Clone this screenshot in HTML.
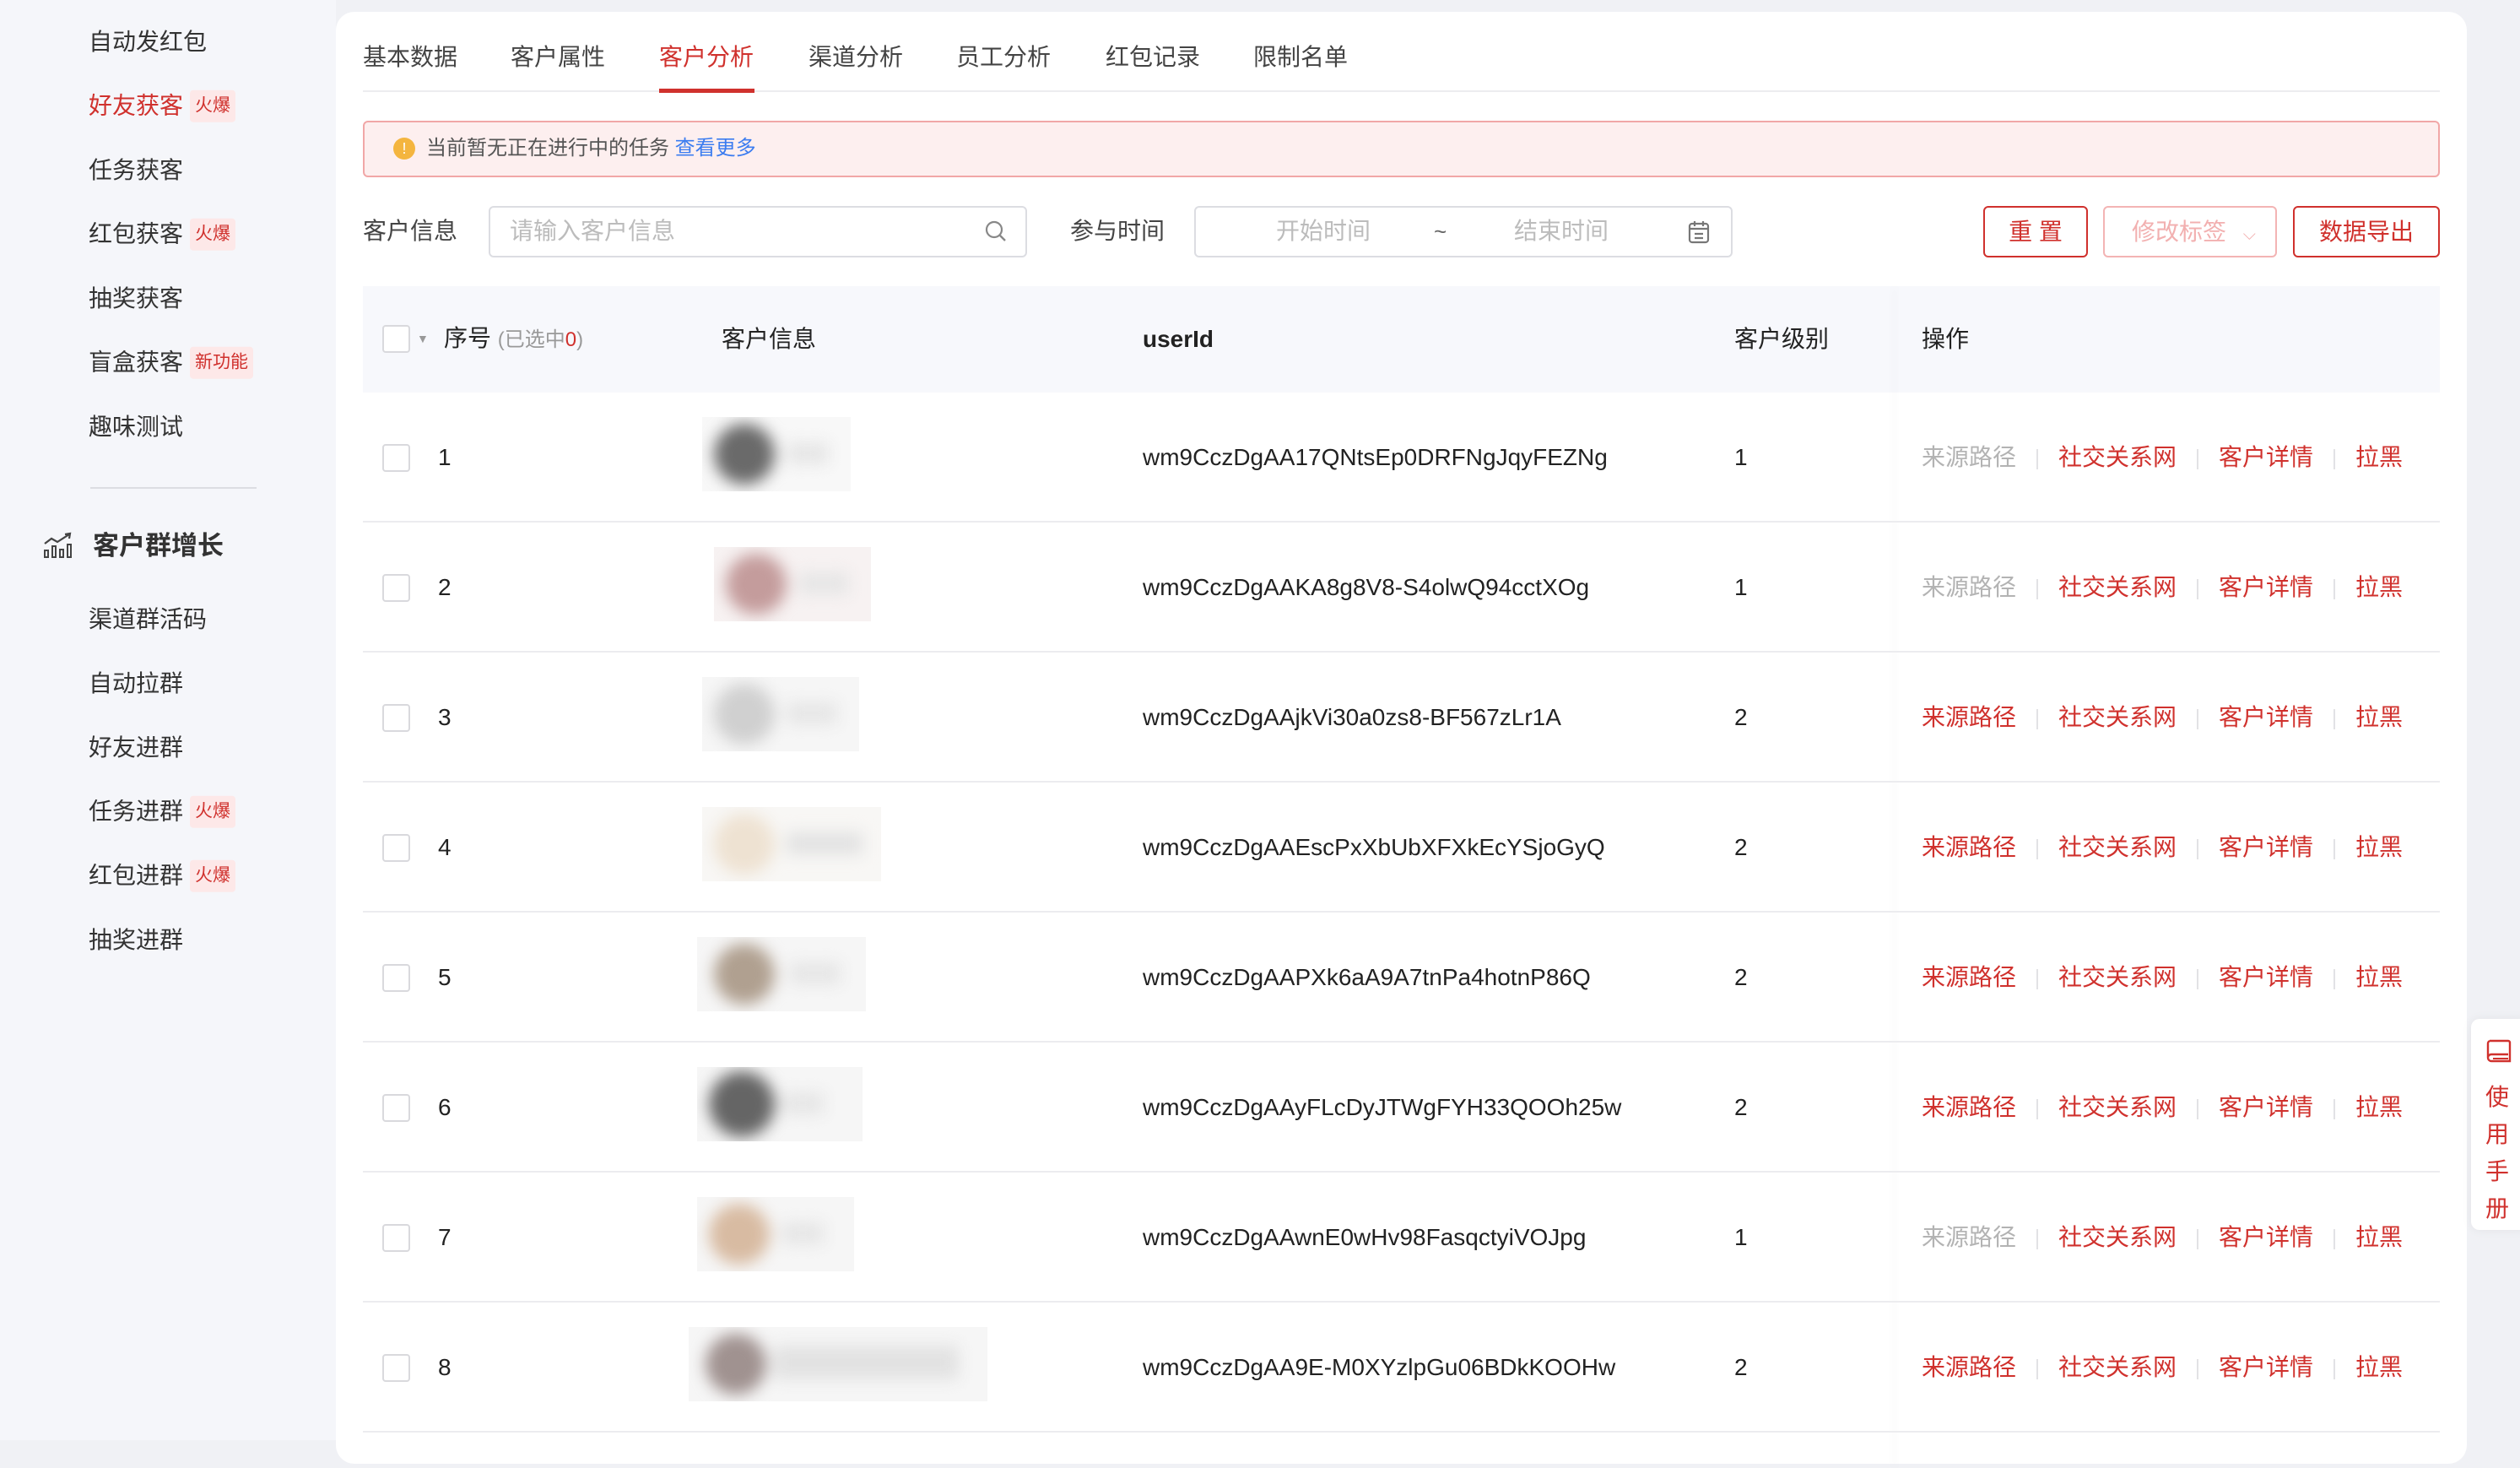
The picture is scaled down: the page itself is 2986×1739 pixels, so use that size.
<!DOCTYPE html>
<html><head><meta charset="utf-8"><style>
*{margin:0;padding:0;box-sizing:border-box}
body{width:2986px;height:1706px;background:#f0f1f5;font-family:"Liberation Sans","Noto Sans CJK SC",sans-serif;position:relative;overflow:hidden;color:#333}
.a{position:absolute;white-space:nowrap}
.side{position:absolute;left:0;top:0;width:398px;height:1706px;background:#f5f6fa}
.si{position:absolute;left:105px;font-size:28px;color:#333;line-height:40px;transform:translateY(-50%)}
.bd{display:inline-block;background:#fde8e8;color:#d0312d;font-size:21px;line-height:38px;padding:0 6px;border-radius:4px;margin-left:8px;vertical-align:middle;position:relative;top:-2px}
.card{position:absolute;left:398px;top:14px;width:2525px;height:1720px;background:#fff;border-radius:22px}
.tab{position:absolute;top:48px;font-size:28px;color:#444;line-height:40px}
.mid{transform:translateY(-50%)}
.row{position:absolute;left:430px;width:2461px;height:154px;border-bottom:2px solid #ececef}
.cb{position:absolute;width:33px;height:33px;border:2px solid #d9d9dd;border-radius:4px;background:#fff}
.td{position:absolute;font-size:28px;color:#222;line-height:40px;top:57px;white-space:nowrap}
.op{position:absolute;top:57px;font-size:28px;line-height:40px;color:#d0312d;white-space:nowrap}
.op .g{color:#b3b3b3}
.sep{display:inline-block;width:2px;height:24px;background:#e2e2e5;vertical-align:middle;margin:0 24px 0 24px}
.btn{position:absolute;top:244px;height:61px;border:2px solid #d0312d;border-radius:6px;color:#d0312d;font-size:28px;line-height:57px;text-align:center}
.av{position:absolute;top:29px;height:88px;overflow:hidden;background:#f6f6f6}
.av .in{position:absolute;left:0;top:0;width:100%;height:100%;filter:blur(9px)}
.av .c{position:absolute;left:14px;top:8px;width:72px;height:72px;border-radius:50%}
.av .n{position:absolute;left:100px;top:30px;height:26px;background:#e6e6e6}
</style></head><body>
<div class="side">
<div class="si" style="top:50px">自动发红包</div>
<div class="si" style="top:126px;color:#d0312d">好友获客<span class="bd">火爆</span></div>
<div class="si" style="top:202px">任务获客</div>
<div class="si" style="top:278px">红包获客<span class="bd">火爆</span></div>
<div class="si" style="top:354px">抽奖获客</div>
<div class="si" style="top:430px">盲盒获客<span class="bd">新功能</span></div>
<div class="si" style="top:506px">趣味测试</div>
<div class="a" style="left:107px;top:577px;width:197px;height:2px;background:#dcdde2"></div>
<svg class="a" style="left:51px;top:630px" width="36" height="32" viewBox="0 0 36 32"><path d="M2 14 L10 8 L17 12 L31 3 M26 3 L32 2 L31 8" fill="none" stroke="#444" stroke-width="2.2"/><rect x="2" y="22" width="4" height="8" fill="none" stroke="#444" stroke-width="2"/><rect x="11" y="17" width="4" height="13" fill="none" stroke="#444" stroke-width="2"/><rect x="20" y="21" width="4" height="9" fill="none" stroke="#444" stroke-width="2"/><rect x="29" y="15" width="4" height="15" fill="none" stroke="#444" stroke-width="2"/></svg>
<div class="si" style="top:647px;left:110px;font-size:31px;font-weight:bold;color:#333">客户群增长</div>
<div class="si" style="top:734px">渠道群活码</div>
<div class="si" style="top:810px">自动拉群</div>
<div class="si" style="top:886px">好友进群</div>
<div class="si" style="top:962px">任务进群<span class="bd">火爆</span></div>
<div class="si" style="top:1038px">红包进群<span class="bd">火爆</span></div>
<div class="si" style="top:1114px">抽奖进群</div>
</div>
<div class="card"></div>
<div class="tab" style="left:430px">基本数据</div>
<div class="tab" style="left:605px">客户属性</div>
<div class="tab" style="left:781px;color:#d0312d">客户分析</div>
<div class="tab" style="left:958px">渠道分析</div>
<div class="tab" style="left:1133px">员工分析</div>
<div class="tab" style="left:1310px">红包记录</div>
<div class="tab" style="left:1485px">限制名单</div>
<div class="a" style="left:430px;top:107px;width:2461px;height:2px;background:#ececef"></div>
<div class="a" style="left:781px;top:105px;width:113px;height:5px;background:#d0312d"></div>
<div class="a" style="left:430px;top:143px;width:2461px;height:67px;background:#fdefef;border:2px solid #f1a7a7;border-radius:6px"></div>
<div class="a" style="left:466px;top:163px;width:26px;height:26px;border-radius:50%;background:#f4b53f;color:#fff;font-size:18px;line-height:26px;text-align:center">!</div>
<div class="a" style="left:505px;top:160px;font-size:24px;line-height:32px;color:#555">当前暂无正在进行中的任务 <span style="color:#3b7cf0">查看更多</span></div>
<div class="a mid" style="left:430px;top:274px;font-size:28px;line-height:40px;color:#444">客户信息</div>
<div class="a" style="left:579px;top:244px;width:638px;height:61px;border:2px solid #dcdde2;border-radius:6px"></div>
<div class="a mid" style="left:604px;top:274px;font-size:28px;line-height:40px;color:#bcbcbc">请输入客户信息</div>
<svg class="a" style="left:1166px;top:260px" width="28" height="28" viewBox="0 0 28 28"><circle cx="12" cy="12" r="9" fill="none" stroke="#888" stroke-width="2.2"/><path d="M19 19 L25 25" stroke="#888" stroke-width="2.4"/></svg>
<div class="a mid" style="left:1268px;top:274px;font-size:28px;line-height:40px;color:#444">参与时间</div>
<div class="a" style="left:1415px;top:244px;width:638px;height:61px;border:2px solid #dcdde2;border-radius:6px"></div>
<div class="a mid" style="left:1512px;top:274px;font-size:28px;line-height:40px;color:#bcbcbc">开始时间</div>
<div class="a mid" style="left:1699px;top:274px;font-size:26px;line-height:40px;color:#666">~</div>
<div class="a mid" style="left:1794px;top:274px;font-size:28px;line-height:40px;color:#bcbcbc">结束时间</div>
<svg class="a" style="left:1999px;top:260px" width="28" height="30" viewBox="0 0 28 30"><rect x="3" y="5" width="22" height="22" rx="3" fill="none" stroke="#777" stroke-width="2.2"/><path d="M9 2v6M19 2v6M3 11h22M9 17h10M9 22h10" stroke="#777" stroke-width="2.2"/></svg>
<div class="btn" style="left:2350px;width:124px">重 置</div>
<div class="btn" style="left:2492px;width:206px;border-color:#f3b4b4;color:#f2b0b0;text-align:left;padding-left:32px">修改标签 <span style="font-size:20px;margin-left:12px">&#x2335;</span></div>
<div class="btn" style="left:2717px;width:174px">数据导出</div>
<div class="a" style="left:430px;top:339px;width:2461px;height:126px;background:#f7f8fc"></div>
<div class="a" style="left:2250px;top:339px;width:2px;height:1400px;box-shadow:-6px 0 10px rgba(0,0,0,0.06)"></div>
<div class="cb" style="left:453px;top:385px"></div>
<div class="a" style="left:494px;top:393px;font-size:14px;color:#999">▼</div>
<div class="a mid" style="left:526px;top:402px;font-size:28px;line-height:40px;color:#222">序号 <span style="font-size:24px;color:#999">(已选中<span style="color:#d0312d">0</span>)</span></div>
<div class="a mid" style="left:855px;top:402px;font-size:28px;line-height:40px;color:#222">客户信息</div>
<div class="a mid" style="left:1354px;top:402px;font-size:28px;line-height:40px;color:#222;font-weight:bold">userId</div>
<div class="a mid" style="left:2055px;top:402px;font-size:28px;line-height:40px;color:#222">客户级别</div>
<div class="a mid" style="left:2277px;top:402px;font-size:28px;line-height:40px;color:#222">操作</div>

<div class="row" style="top:465px"><div class="cb" style="left:23px;top:61px"></div><div class="td" style="left:89px">1</div>
<div class="av" style="left:402px;width:176px;background:#f8f8f8"><div class="in"><div class="c" style="background:#6a6a6a"></div><div class="n" style="width:50px"></div></div></div>
<div class="td" style="left:924px">wm9CczDgAA17QNtsEp0DRFNgJqyFEZNg</div><div class="td" style="left:1625px">1</div>
<div class="op" style="left:1847px"><span class="g">来源路径</span><span class="sep"></span>社交关系网<span class="sep"></span>客户详情<span class="sep"></span>拉黑</div></div>

<div class="row" style="top:619px"><div class="cb" style="left:23px;top:61px"></div><div class="td" style="left:89px">2</div>
<div class="av" style="left:416px;width:186px;background:#f7f2f2"><div class="in"><div class="c" style="background:#c49c9c"></div><div class="n" style="width:60px"></div></div></div>
<div class="td" style="left:924px">wm9CczDgAAKA8g8V8-S4olwQ94cctXOg</div><div class="td" style="left:1625px">1</div>
<div class="op" style="left:1847px"><span class="g">来源路径</span><span class="sep"></span>社交关系网<span class="sep"></span>客户详情<span class="sep"></span>拉黑</div></div>

<div class="row" style="top:773px"><div class="cb" style="left:23px;top:61px"></div><div class="td" style="left:89px">3</div>
<div class="av" style="left:402px;width:186px"><div class="in"><div class="c" style="background:#d0d0d0"></div><div class="n" style="width:60px"></div></div></div>
<div class="td" style="left:924px">wm9CczDgAAjkVi30a0zs8-BF567zLr1A</div><div class="td" style="left:1625px">2</div>
<div class="op" style="left:1847px">来源路径<span class="sep"></span>社交关系网<span class="sep"></span>客户详情<span class="sep"></span>拉黑</div></div>

<div class="row" style="top:927px"><div class="cb" style="left:23px;top:61px"></div><div class="td" style="left:89px">4</div>
<div class="av" style="left:402px;width:212px;background:#f8f7f5"><div class="in"><div class="c" style="background:#eee2d2"></div><div class="n" style="width:90px;background:#e2e2e2"></div></div></div>
<div class="td" style="left:924px">wm9CczDgAAEscPxXbUbXFXkEcYSjoGyQ</div><div class="td" style="left:1625px">2</div>
<div class="op" style="left:1847px">来源路径<span class="sep"></span>社交关系网<span class="sep"></span>客户详情<span class="sep"></span>拉黑</div></div>

<div class="row" style="top:1081px"><div class="cb" style="left:23px;top:61px"></div><div class="td" style="left:89px">5</div>
<div class="av" style="left:396px;width:200px"><div class="in"><div class="c" style="left:20px;background:#b0a090"></div><div class="n" style="left:110px;width:60px"></div></div></div>
<div class="td" style="left:924px">wm9CczDgAAPXk6aA9A7tnPa4hotnP86Q</div><div class="td" style="left:1625px">2</div>
<div class="op" style="left:1847px">来源路径<span class="sep"></span>社交关系网<span class="sep"></span>客户详情<span class="sep"></span>拉黑</div></div>

<div class="row" style="top:1235px"><div class="cb" style="left:23px;top:61px"></div><div class="td" style="left:89px">6</div>
<div class="av" style="left:396px;width:196px"><div class="in"><div class="c" style="width:78px;height:78px;top:5px;background:#656565"></div><div class="n" style="width:50px"></div></div></div>
<div class="td" style="left:924px">wm9CczDgAAyFLcDyJTWgFYH33QOOh25w</div><div class="td" style="left:1625px">2</div>
<div class="op" style="left:1847px">来源路径<span class="sep"></span>社交关系网<span class="sep"></span>客户详情<span class="sep"></span>拉黑</div></div>

<div class="row" style="top:1389px"><div class="cb" style="left:23px;top:61px"></div><div class="td" style="left:89px">7</div>
<div class="av" style="left:396px;width:186px"><div class="in"><div class="c" style="background:#d8bba2"></div><div class="n" style="width:50px"></div></div></div>
<div class="td" style="left:924px">wm9CczDgAAwnE0wHv98FasqctyiVOJpg</div><div class="td" style="left:1625px">1</div>
<div class="op" style="left:1847px"><span class="g">来源路径</span><span class="sep"></span>社交关系网<span class="sep"></span>客户详情<span class="sep"></span>拉黑</div></div>

<div class="row" style="top:1543px"><div class="cb" style="left:23px;top:61px"></div><div class="td" style="left:89px">8</div>
<div class="av" style="left:386px;width:354px"><div class="in"><div class="c" style="left:20px;background:#a09290"></div><div class="n" style="left:100px;top:22px;width:220px;height:40px;background:#e2e2e2"></div></div></div>
<div class="td" style="left:924px">wm9CczDgAA9E-M0XYzlpGu06BDkKOOHw</div><div class="td" style="left:1625px">2</div>
<div class="op" style="left:1847px">来源路径<span class="sep"></span>社交关系网<span class="sep"></span>客户详情<span class="sep"></span>拉黑</div></div>

<div class="a" style="left:2928px;top:1207px;width:70px;height:250px;background:#fff;border-radius:10px;box-shadow:0 0 12px rgba(0,0,0,0.06)"></div>
<svg class="a" style="left:2944px;top:1230px" width="34" height="32" viewBox="0 0 34 32"><path d="M6 3h22a2 2 0 0 1 2 2v22H8a4 4 0 0 1 0-8h20M4 23V7a4 4 0 0 1 2-4" fill="none" stroke="#d0312d" stroke-width="2.4"/><path d="M10 24h18" stroke="#d0312d" stroke-width="2"/></svg>
<div class="a" style="left:2945px;top:1278px;font-size:28px;line-height:44px;color:#d0312d;white-space:normal;width:30px">使<br>用<br>手<br>册</div>
</body></html>
